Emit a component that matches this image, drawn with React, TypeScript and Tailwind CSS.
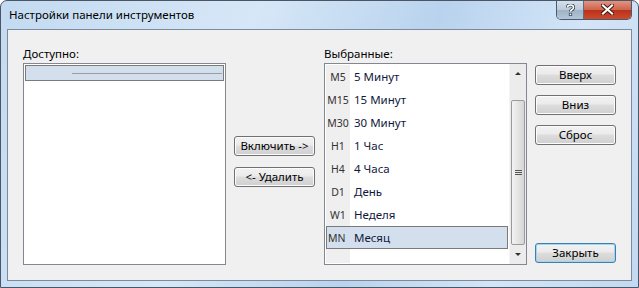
import React from "react";

const font = { fontFamily: '"Noto Sans", "Open Sans", sans-serif' };

const selected = [
    { code: "M5", name: "5 Минут" },
    { code: "M15", name: "15 Минут" },
    { code: "M30", name: "30 Минут" },
    { code: "H1", name: "1 Час" },
    { code: "H4", name: "4 Часа" },
    { code: "D1", name: "День" },
    { code: "W1", name: "Неделя" },
    { code: "MN", name: "Месяц" },
];

function WinButton({ label, isDefault }: { label: string; isDefault?: boolean }) {
    return (
        <button
            className={
                "h-[20px] w-[81px] rounded-[3px] border text-[11.5px] leading-none text-black bg-[linear-gradient(#f2f2f2_0%,#ebebeb_45%,#dddddd_50%,#cfcfcf_100%)] " +
                (isDefault
                    ? "border-[#3c7fb1] shadow-[inset_0_0_0_1px_#9fd5f2]"
                    : "border-[#707070] shadow-[inset_0_0_0_1px_#fcfcfc]")
            }
        >
            {label}
        </button>
    );
}

function Scrollbar() {
    return (
        <div className="flex w-[17px] flex-col bg-[#ececec] border-l border-[#f4f4f4]">
            <div className="flex h-[17px] items-center justify-center pt-[2px]">
                <div className="h-0 w-0 border-x-[3px] border-b-[3px] border-x-transparent border-b-[#333]" />
            </div>
            <div className="h-[19px]" />
            <div className="mx-[1px] flex h-[145px] items-center justify-center rounded-[2px] border border-[#9a9a9a] bg-[linear-gradient(90deg,#f3f3f3,#e4e4e4_50%,#d6d6d6)]">
                <div className="flex flex-col gap-[1px]">
                    <div className="h-[1px] w-[7px] bg-[#555]" />
                    <div className="h-[1px] w-[7px] bg-[#555]" />
                    <div className="h-[1px] w-[7px] bg-[#555]" />
                </div>
            </div>
            <div className="flex flex-1 items-center justify-center">
                <div className="h-0 w-0 border-x-[3px] border-t-[3px] border-x-transparent border-t-[#333]" />
            </div>
        </div>
    );
}

export default function App() {
    return (
        <div
            className="relative h-[288px] w-[639px] overflow-hidden rounded-t-[7px] border border-[#4a5566] bg-[linear-gradient(110deg,#c3daf1_0%,#d6e7f7_35%,#b9d3ee_60%,#d3e5f7_80%,#c2d9f1_100%)] px-[6px] pb-[6px] pt-[28px]"
            style={font}
        >
            {/* title bar */}
            <div className="absolute left-[8px] top-[6px] text-[11.5px] leading-[16px] text-black">
                Настройки панели инструментов
            </div>
            <div className="absolute right-[6px] top-[-1px] flex h-[20px] overflow-hidden rounded-b-[5px] border border-t-0 border-[#4b5a6c]">
                <div className="flex w-[27px] items-center justify-center border-r border-[#5d6d80] bg-[linear-gradient(#d6e1ec,#bccbdb_50%,#9fb2c6_51%,#b3c5d7)]">
                    <svg width="9" height="12" viewBox="0 0 9 12">
                        <path
                            d="M1.5 3.5 Q1.5 1 4.5 1 Q7.5 1 7.5 3.5 Q7.5 5 5.5 6 Q4.5 6.6 4.5 7.8"
                            fill="none"
                            stroke="#34414f"
                            strokeWidth="3.2"
                        />
                        <rect x="2.9" y="8.9" width="3.2" height="3" fill="#34414f" />
                        <path
                            d="M1.5 3.5 Q1.5 1 4.5 1 Q7.5 1 7.5 3.5 Q7.5 5 5.5 6 Q4.5 6.6 4.5 7.8"
                            fill="none"
                            stroke="#fff"
                            strokeWidth="1.6"
                        />
                        <rect x="3.7" y="9.6" width="1.6" height="1.6" fill="#fff" />
                    </svg>
                </div>
                <div className="flex w-[47px] items-center justify-center bg-[linear-gradient(#e39a88,#d0654d_50%,#b8301a_51%,#cc4a2e)]">
                    <svg width="13" height="11" viewBox="0 0 13 11">
                        <path d="M2 1.5 L11 9.5 M11 1.5 L2 9.5" stroke="#3e140d" strokeWidth="4" strokeLinecap="square" />
                        <path d="M2 1.5 L11 9.5 M11 1.5 L2 9.5" stroke="#fff" strokeWidth="2.2" strokeLinecap="square" />
                    </svg>
                </div>
            </div>

            {/* client area */}
            <div className="flex h-full w-full gap-[8px] border border-[#7b8a9c] bg-[#f0f0f0] pl-[15px] pt-[16px] text-[11.5px] leading-[16px] text-black">
                {/* available */}
                <div className="flex w-[203px] flex-col">
                    <div className="mb-[1px] h-[16px]">Доступно:</div>
                    <div className="h-[202px] border border-[#828790] bg-white p-[1px]">
                        <div className="flex h-[16px] items-center border border-[#7a7a7a] bg-[#d3dfec] pl-[46px] pr-[1px]">
                            <div className="h-[1px] w-full bg-[#9d9d9d]" />
                        </div>
                    </div>
                </div>

                {/* move buttons */}
                <div className="flex flex-col gap-[11px] pt-[90px]">
                    <WinButton label="Включить ->" />
                    <WinButton label="<- Удалить" />
                </div>

                {/* selected */}
                <div className="ml-[1px] flex w-[203px] flex-col">
                    <div className="mb-[1px] h-[16px]">Выбранные:</div>
                    <div className="flex h-[202px] border border-[#828790] bg-white">
                        <div className="flex flex-1 flex-col p-[1px]">
                            {selected.map((item) =>
                                item.code === "MN" ? (
                                    <div
                                        key={item.code}
                                        className="flex h-[23px] items-center border border-[#7a7a7a] bg-[#d3dfec]"
                                    >
                                        <span className="w-[27px] pl-[1px] text-[10.5px] text-[#333]">{item.code}</span>
                                        <span className="text-[#10183c]">{item.name}</span>
                                    </div>
                                ) : (
                                    <div key={item.code} className="flex h-[23px] items-center">
                                        <span className="flex h-full w-[24px] items-center justify-center bg-[#efefef] text-[10.5px] text-[#333]">
                                            {item.code}
                                        </span>
                                        <span className="pl-[4px] text-[#10183c]">{item.name}</span>
                                    </div>
                                )
                            )}
                            <div className="w-[24px] flex-1 bg-[#efefef]" />
                        </div>
                        <Scrollbar />
                    </div>
                </div>

                {/* right buttons */}
                <div className="flex flex-col pt-[19px]">
                    <div className="flex flex-col gap-[10px]">
                        <WinButton label="Вверх" />
                        <WinButton label="Вниз" />
                        <WinButton label="Сброс" />
                    </div>
                    <div className="mt-[98px]">
                        <WinButton label="Закрыть" isDefault />
                    </div>
                </div>
            </div>
        </div>
    );
}
